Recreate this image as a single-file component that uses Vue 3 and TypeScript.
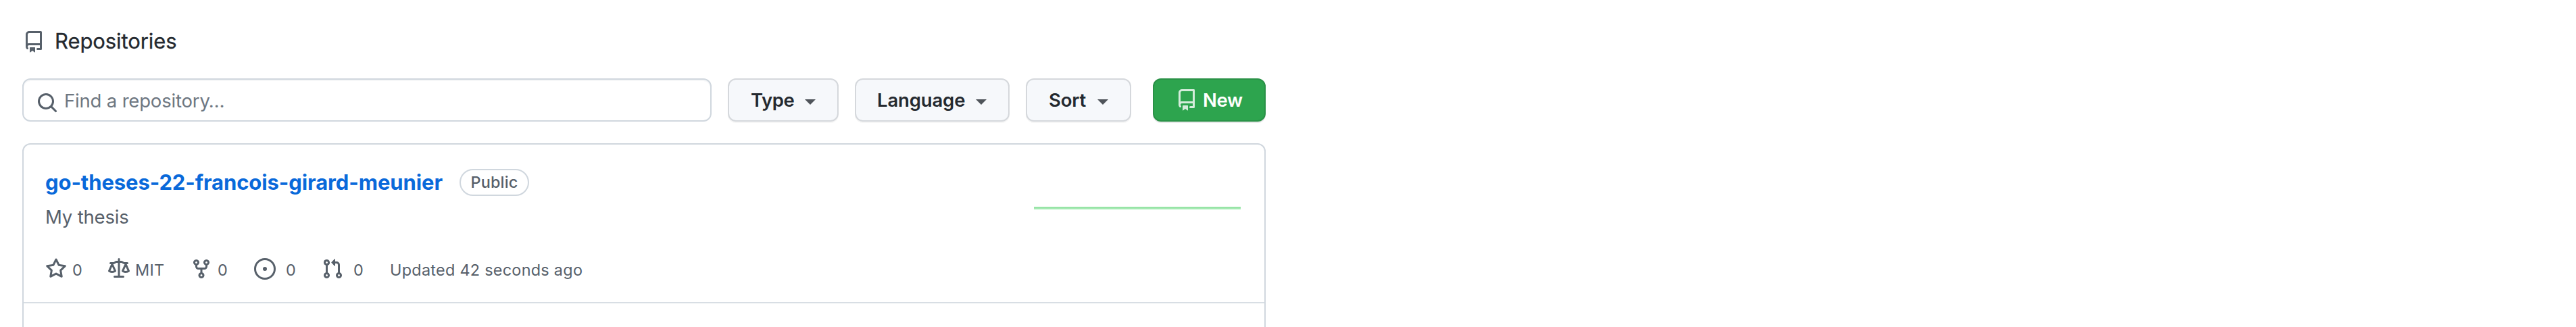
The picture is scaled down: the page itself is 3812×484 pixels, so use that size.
<script setup lang="ts">
interface Stat { id: string; icon: string; label: string }

const icons = {
  repo: 'M2 2.5A2.5 2.5 0 014.5 0h8.75a.75.75 0 01.75.75v12.5a.75.75 0 01-.75.75h-2.5a.75.75 0 110-1.5h1.75v-2h-8a1 1 0 00-.714 1.7.75.75 0 01-1.072 1.05A2.495 2.495 0 012 11.5v-9zm10.5-1V9h-8c-.356 0-.694.074-1 .208V2.5a1 1 0 011-1h8zM5 12.25v3.25a.25.25 0 00.4.2l1.45-1.087a.25.25 0 01.3 0L8.6 15.7a.25.25 0 00.4-.2v-3.25a.25.25 0 00-.25-.25h-3.5a.25.25 0 00-.25.25z',
  search: 'M11.5 7a4.499 4.499 0 11-8.998 0A4.499 4.499 0 0111.5 7zm-.82 4.74a6 6 0 111.06-1.06l3.04 3.04a.75.75 0 11-1.06 1.06l-3.04-3.04z',
  star: 'M8 .25a.75.75 0 01.673.418l1.882 3.815 4.21.612a.75.75 0 01.416 1.279l-3.046 2.97.719 4.192a.75.75 0 01-1.088.791L8 12.347l-3.766 1.98a.75.75 0 01-1.088-.79l.72-4.194L.818 6.374a.75.75 0 01.416-1.28l4.21-.611L7.327.668A.75.75 0 018 .25zm0 2.445L6.615 5.5a.75.75 0 01-.564.41l-3.097.45 2.24 2.184a.75.75 0 01.216.664l-.528 3.084 2.769-1.456a.75.75 0 01.698 0l2.77 1.456-.53-3.084a.75.75 0 01.216-.664l2.24-2.183-3.096-.45a.75.75 0 01-.564-.41L8 2.694v.001z',
  law: 'M8.75.75a.75.75 0 00-1.5 0V2h-.984c-.305 0-.604.08-.869.23l-1.288.737A.25.25 0 013.984 3H1.75a.75.75 0 000 1.5h.428L.066 9.192a.75.75 0 00.154.838l.53-.53-.53.53v.001l.002.002.002.002.006.006.016.015.045.04a3.514 3.514 0 00.686.45A4.492 4.492 0 003 11c.88 0 1.556-.22 2.023-.454a3.515 3.515 0 00.686-.45l.045-.04.016-.015.006-.006.002-.002.001-.002L5.25 9.5l.53.53a.75.75 0 00.154-.838L3.822 4.5h.162c.305 0 .604-.08.869-.23l1.289-.737a.25.25 0 01.124-.033h.984V13h-2.5a.75.75 0 000 1.5h6.5a.75.75 0 000-1.5h-2.5V3.5h.984a.25.25 0 01.124.033l1.29.736c.264.152.563.231.868.231h.162l-2.112 4.692a.75.75 0 00.154.838l.53-.53-.53.53v.001l.002.002.002.002.006.006.016.015.045.04a3.517 3.517 0 00.686.45A4.492 4.492 0 0013 11c.88 0 1.556-.22 2.023-.454a3.512 3.512 0 00.686-.45l.045-.04.01-.01.006-.005.006-.006.002-.002.001-.002-.529-.531.53.53a.75.75 0 00.154-.838L13.823 4.5h.427a.75.75 0 000-1.5h-2.234a.25.25 0 01-.124-.033l-1.29-.736A1.75 1.75 0 009.735 2H8.75V.75zM1.695 9.227c.285.135.718.273 1.305.273s1.02-.138 1.305-.273L3 6.327l-1.305 2.9zm10 0c.285.135.718.273 1.305.273s1.02-.138 1.305-.273L13 6.327l-1.305 2.9z',
  fork: 'M5 3.25a.75.75 0 11-1.5 0 .75.75 0 011.5 0zm0 2.122a2.25 2.25 0 10-1.5 0v.878A2.25 2.25 0 005.75 8.5h1.5v2.128a2.251 2.251 0 101.5 0V8.5h1.5a2.25 2.25 0 002.25-2.25v-.878a2.25 2.25 0 10-1.5 0v.878a.75.75 0 01-.75.75h-4.5A.75.75 0 015 6.25v-.878zm3.75 7.378a.75.75 0 11-1.5 0 .75.75 0 011.5 0zm3-8.75a.75.75 0 100-1.5.75.75 0 000 1.5z',
  issue: 'M8 9.5a1.5 1.5 0 100-3 1.5 1.5 0 000 3zM8 0a8 8 0 100 16A8 8 0 008 0zM1.5 8a6.5 6.5 0 1113 0 6.5 6.5 0 01-13 0z',
  pull: 'M7.177 3.073L9.573.677A.25.25 0 0110 .854v4.792a.25.25 0 01-.427.177L7.177 3.427a.25.25 0 010-.354zM3.75 2.5a.75.75 0 100 1.5.75.75 0 000-1.5zm-2.25.75a2.25 2.25 0 113 2.122v5.256a2.251 2.251 0 11-1.5 0V5.372A2.25 2.25 0 011.5 3.25zM11 2.5h-1V4h1a1 1 0 011 1v5.628a2.251 2.251 0 101.5 0V5A2.5 2.5 0 0011 2.5zm1 10.25a.75.75 0 111.5 0 .75.75 0 01-1.5 0zM3.75 12a.75.75 0 100 1.5.75.75 0 000-1.5z',
}

const filters = ['Type', 'Language', 'Sort']
const stats: Stat[] = [
  { id: 'star', icon: icons.star, label: '0' },
  { id: 'law', icon: icons.law, label: 'MIT' },
  { id: 'fork', icon: icons.fork, label: '0' },
  { id: 'issue', icon: icons.issue, label: '0' },
  { id: 'pull', icon: icons.pull, label: '0' },
]
</script>

<template>
  <main class="page">
    <header class="heading">
      <svg class="icon" viewBox="0 0 16 16"><path fill-rule="evenodd" :d="icons.repo" /></svg>
      <h2>Repositories</h2>
    </header>

    <div class="toolbar">
      <div class="search">
        <svg class="icon" viewBox="0 0 16 16"><path fill-rule="evenodd" :d="icons.search" /></svg>
        <span class="placeholder">Find a repository…</span>
      </div>
      <button v-for="f in filters" :key="f" class="btn" :class="f.toLowerCase()">
        <span>{{ f }}</span><i class="caret"></i>
      </button>
      <button class="btn new">
        <svg class="icon" viewBox="0 0 16 16"><path fill-rule="evenodd" :d="icons.repo" /></svg>
        <span>New</span>
      </button>
    </div>

    <ul class="list">
      <li class="repo">
        <div class="info">
          <div class="title">
            <a class="name">go-theses-22-francois-girard-meunier</a>
            <span class="badge">Public</span>
          </div>
          <p class="desc">My thesis</p>
          <div class="meta">
            <span v-for="s in stats" :key="s.id" class="stat" :class="s.id">
              <svg class="icon" viewBox="0 0 16 16"><path fill-rule="evenodd" :d="s.icon" /></svg>
              <span class="label">{{ s.label }}</span>
            </span>
            <span class="label updated">Updated 42 seconds ago</span>
          </div>
        </div>
        <div class="spark"></div>
      </li>
      <li class="next"></li>
    </ul>
  </main>
</template>

<style>
body { background: #fff; }
</style>

<style scoped>
.page {
  box-sizing: border-box;
  width: 1906px;
  height: 484px;
  overflow: hidden;
  padding: 40px 33px 0;
  font-family: Inter, "Liberation Sans", sans-serif;
  color: #24292f;
  white-space: nowrap;
}
.icon { width: 32px; height: 32px; flex: none; fill: #57606a; display: block; }
.heading { display: flex; align-items: flex-start; height: 42px; padding-left: 1px; }
.heading .icon { margin-top: 6px; }
.heading h2 { margin: 0 0 0 15px; font-size: 31px; font-weight: 400; line-height: 41px; letter-spacing: -0.08px; -webkit-text-stroke: 0.3px #24292f; }
.toolbar { display: flex; height: 64px; margin-top: 34px; }
.search {
  box-sizing: border-box; width: 1020px; height: 64px; display: flex; align-items: center; flex: none;
  padding-left: 19px; border: 2px solid #d0d7de; border-radius: 12px;
  box-shadow: inset 0 2px 0 rgba(208, 215, 222, .2);
}
.search .icon { margin-top: 8px; }
.placeholder { margin: 2px 0 0 9px; font-size: 27.5px; line-height: 40px; letter-spacing: -0.18px; color: #6e7781; }
.btn {
  box-sizing: border-box; height: 64px; display: flex; align-items: center; flex: none;
  margin: 0 0 0 24px; padding: 0 32px; border: 2px solid #d5d8dc; border-radius: 12px;
  background: #f6f8fb; color: #24292f; font: 600 27.5px/40px Inter, "Liberation Sans", sans-serif;
  letter-spacing: -0.15px;
  box-shadow: 0 2px 0 rgba(27, 31, 36, .04);
}
.type { width: 164px; letter-spacing: -0.45px; }
.language { width: 229px; padding-left: 31px; }
.sort { width: 156px; }
.caret { margin: 6px 0 0 auto; border: 8px solid transparent; border-top-color: #4f545a; border-bottom: 0; }
.new { width: 167px; margin-left: 32px; background: #2da44e; border-color: #2a9147; color: #fff; letter-spacing: -0.4px; box-shadow: 0 2px 0 rgba(27, 31, 36, .1); }
.new .icon { fill: #fff; opacity: .8; margin-right: 8px; }
.list {
  list-style: none; margin: 32px 0 0; padding: 0; box-sizing: border-box; width: 1840px; height: 300px;
  border: 2px solid #d0d7de; border-radius: 12px;
}
.repo { display: flex; justify-content: space-between; box-sizing: border-box; height: 235px; padding: 32px 35px 0 32px; border-bottom: 2px solid #d8dee4; }
.title { display: flex; align-items: center; height: 48px; }
.name { width: 589px; font-size: 31px; font-weight: 700; letter-spacing: -0.09px; color: #0969da; line-height: 48px; }
.badge {
  box-sizing: border-box; width: 103px; height: 40px; margin-left: 24px; border: 2px solid #d0d7de; border-radius: 20px;
  font-size: 23.4px; font-weight: 500; line-height: 35px; letter-spacing: 0.2px; text-align: center; color: #57606a;
}
.desc { margin: 6px 0 0; font-size: 27.5px; line-height: 42px; letter-spacing: -0.16px; color: #57606a; }
.meta {
  display: grid; grid-template-columns: 93px 122px 94px 100px 101px auto; align-items: center;
  height: 32px; margin-top: 38px; font-size: 23.4px; line-height: 32px; letter-spacing: 0.28px; color: #57606a;
}
.stat { display: flex; align-items: center; height: 32px; }
.label { margin-top: 4px; }
.stat .label { margin-left: 8px; }
.issue .label, .pull .label { margin-left: 15px; }
.spark { width: 306px; height: 4px; margin-top: 60px; background: linear-gradient(#8fdf9f, #b0efbd); }
</style>
